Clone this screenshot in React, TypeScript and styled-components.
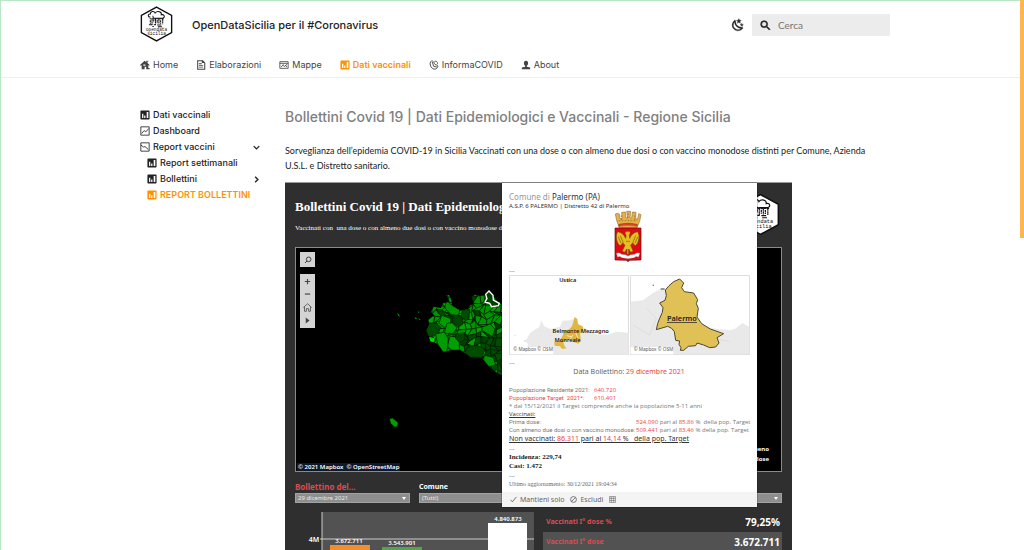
import React from "react";
import styled, { createGlobalStyle } from "styled-components";

const GlobalStyle = createGlobalStyle`
  * { box-sizing: border-box; }
  html { scrollbar-width: none; }
  body { margin: 0; background: #fff; color: #222; font-family: Lato, "Liberation Sans", sans-serif; }
  h1, h2, p, ul { margin: 0; padding: 0; }
  ul { list-style: none; }
  a { color: inherit; text-decoration: none; }
  button { border: 0; padding: 0; background: none; color: inherit; font: inherit; }
`;

const Page = styled.div`
  height: 100vh;
  overflow: hidden;
  border-top: 1px solid #b9e6c4;
  border-left: 1px solid #b9e6c4;
`;
const ScrollThumb = styled.div`
  position: fixed;
  top: 0;
  right: 0;
  width: 4px;
  height: 238px;
  background: #ffb74d;
`;
const Container = styled.div`
  max-width: 759px;
  margin: 0 auto;
  padding: 0 2px 0 7px;
`;
const Header = styled.header`
  border-bottom: 1px solid #eee;
`;
const TopBar = styled.div`
  display: flex;
  align-items: center;
  height: 48px;
`;
const SiteTitle = styled.a`
  flex: 1;
  margin-left: 19px;
  font: 500 11px/20px Inter, sans-serif;
  color: #222;
`;
const IconButton = styled.button`
  display: flex;
  margin-right: 7px;
`;
const SearchBox = styled.label`
  display: flex;
  align-items: center;
  gap: 6px;
  width: 138px;
  height: 22px;
  padding-left: 7px;
  border-radius: 1px;
  background: #ececec;
`;
const SearchInput = styled.input`
  width: 90px;
  border: 0;
  padding: 0;
  background: none;
  font: 10px/14px Lato, sans-serif;
  &::placeholder { color: #757575; opacity: 1; }
`;
const Nav = styled.nav`
  display: flex;
  gap: 18px;
  height: 28px;
  padding-top: 7px;
`;
const NavLink = styled.a<{ $active?: boolean }>`
  display: flex;
  align-items: center;
  gap: 3px;
  height: 18px;
  font: ${(p) => (p.$active ? 600 : 400)} 9px/18px Inter, sans-serif;
  color: ${(p) => (p.$active ? "#ff9100" : "#444")};
`;
const Body = styled(Container)`
  display: flex;
  align-items: flex-start;
`;
const Sidebar = styled.aside`
  width: 122px;
  flex: none;
  margin-right: 23px;
  padding-top: 29px;
`;
const SideLink = styled.a<{ $nested?: boolean; $active?: boolean }>`
  display: flex;
  align-items: center;
  gap: 3px;
  height: 16px;
  padding-left: ${(p) => (p.$nested ? 7 : 0)}px;
  font: ${(p) => (p.$active ? 600 : 500)} 9px/16px Inter, sans-serif;
  color: ${(p) => (p.$active ? "#ff9100" : "#222")};
`;
const SideText = styled.span`
  flex: 1;
  white-space: nowrap;
`;
const Main = styled.main`
  flex: 1;
  min-width: 0;
`;
const PageTitle = styled.h1`
  margin-top: 27px;
  font: 500 14px/24px Inter, sans-serif;
  color: #808080;
`;
const Intro = styled.p`
  max-width: 598px;
  margin: 14px 0 9px;
  font-size: 9px;
  line-height: 15px;
  color: #222;
`;

const Dashboard = styled.section`
  position: relative;
  max-width: 507px;
  padding: 16px 10px 0;
  border-top: 1px solid #999;
  background: #2f2f2f;
  color: #fff;
`;
const DashTitle = styled.h2`
  font: bold 13px/16px "Liberation Serif", serif;
  white-space: nowrap;
  overflow: hidden;
`;
const DashSubtitle = styled.p`
  margin: 8px 0 13px;
  font: 7px/11px "Liberation Serif", serif;
  white-space: nowrap;
  overflow: hidden;
`;
const DashLogo = styled.div`
  position: absolute;
  top: 10px;
  right: 12px;
`;
const MapPanel = styled.div`
  position: relative;
  height: 225px;
  border: 1px solid #8a8a8a;
  background: #000;
  overflow: hidden;
`;
const ToolStack = styled.div<{ $top: number }>`
  position: absolute;
  left: 4px;
  top: ${(p) => p.$top}px;
  width: 15px;
  background: #d4d4d4;
  color: #444;
`;
const Tool = styled.button<{ $tall?: boolean }>`
  display: flex;
  align-items: center;
  justify-content: center;
  width: 15px;
  height: ${(p) => (p.$tall ? 15 : 12)}px;
`;
const MapCredit = styled.div`
  position: absolute;
  left: 1px;
  bottom: 0;
  padding: 0 1px;
  background: #10182c;
  font: 600 6px/8px "Noto Sans", sans-serif;
`;
const MapLegend = styled.div`
  position: absolute;
  right: 12px;
  bottom: 7px;
  font: bold 6px/10px "Noto Sans", sans-serif;
  text-align: right;
`;
const Filters = styled.div`
  display: flex;
  align-items: flex-end;
  gap: 9px;
  height: 31px;
`;
const Filter = styled.label<{ $accent?: boolean }>`
  display: flex;
  flex-direction: column;
  gap: 1px;
  ${(p) => (p.$accent ? "width: 115px;" : "flex: 1;")}
  font: bold ${(p) => (p.$accent ? 8 : 7)}px/10px "Noto Sans", sans-serif;
  color: ${(p) => (p.$accent ? "#dd4b4f" : "#fff")};
`;
const SelectWrap = styled.span`
  position: relative;
  display: block;
  &::after {
    content: "";
    position: absolute;
    right: 4px;
    top: 4px;
    border: 2px solid transparent;
    border-top: 3px solid #fff;
  }
`;
const Select = styled.select`
  display: block;
  width: 100%;
  height: 10px;
  appearance: none;
  border: 1px solid #a2a2a2;
  border-radius: 0;
  padding: 0 2px;
  background: #8e8e8e;
  color: #e8e8e8;
  font: 6px/8px "Noto Sans", sans-serif;
`;
const Stats = styled.div`
  display: flex;
  align-items: flex-start;
  margin-top: 9px;
`;
const ChartBox = styled.div`
  width: 240px;
  flex: none;
`;
const StatTable = styled.table`
  flex: 1;
  margin-left: 8px;
  border-collapse: collapse;
  font: bold 7px/18px "Noto Sans", sans-serif;
`;
const StatRow = styled.tr<{ $shaded?: boolean }>`
  height: 20px;
  background: ${(p) => (p.$shaded ? "#525252" : "transparent")};
  th { padding: 0 3px; text-align: left; color: #dd4b4f; }
  td { padding: 0 2px; text-align: right; font-size: 10px; }
`;

const Popup = styled.div`
  position: absolute;
  top: 0;
  left: 217px;
  width: 255px;
  background: #fff;
  color: #666;
  box-shadow: 0 0 1px #000;
  font: 6px/8px "Noto Sans", sans-serif;
`;
const PopupBody = styled.div`
  display: flex;
  flex-direction: column;
  height: 309px;
  padding: 8px 7px 0;
`;
const PopupHeading = styled.div`
  font-size: 8px;
  line-height: 12px;
  color: #999;
  b { font-weight: 400; color: #333; }
`;
const PopupSub = styled.div`
  line-height: 7px;
  color: #333;
`;
const Crest = styled.div`
  display: flex;
  justify-content: center;
  height: 56px;
  margin-right: 3px;
`;
const Dashes = styled.div`
  height: 9px;
  line-height: 11px;
`;
const MiniMaps = styled.div`
  display: flex;
  gap: 1px;
  margin-bottom: 3px;
`;
const BulletinDate = styled.div`
  margin: 0 0 10px;
  padding-right: 1px;
  font-size: 7px;
  line-height: 9px;
  text-align: center;
`;
const Line = styled.div`
  display: flex;
  white-space: pre;
  font-family: "Open Sans", sans-serif;
  color: #777;
`;
const LineLabel = styled.span<{ $w: number }>`
  width: ${(p) => p.$w}px;
  flex: none;
  font-family: Roboto, sans-serif;
`;
const Red = styled.span`
  color: #ee4444;
`;
const Under = styled.span`
  text-decoration: underline;
  color: #333;
`;
const NotVaccinated = styled.div`
  height: 10px;
  font-size: 7px;
  line-height: 10px;
  white-space: pre;
`;
const Serif = styled.div<{ $strong?: boolean }>`
  font: ${(p) => (p.$strong ? "bold 7px/9px" : "6px/8px")} "Liberation Serif", serif;
  color: ${(p) => (p.$strong ? "#222" : "#666")};
`;
const PopupBar = styled.div`
  display: flex;
  align-items: center;
  gap: 6px;
  height: 15px;
  padding-left: 8px;
  background: #f4f4f4;
  font-size: 7px;
`;
const PopupAction = styled.button`
  display: flex;
  align-items: center;
  gap: 3px;
`;

/* Icons */
const HexLogo = ({ w, h }: { w: number; h: number }) => (
  <svg width={w} height={h} viewBox="0 0 96 104">
    <path d="M48 3 92 27v50L48 101 4 77V27z" fill="#fff" stroke="#111" strokeWidth="4" />
    <path d="M30 32c-8 0-8-10 0-9 0-8 11-10 14-3 7-8 20-3 18 5 10-2 12 9 3 10H46c-8 2-9-3-8-7" fill="#fff" stroke="#111" strokeWidth="3" />
    <path d="M28 37h42M30 41v10M35 38v16M40 39v8M45 37v17M50 40v10M55 37v15M60 41v10M66 37v16" stroke="#111" strokeWidth="3" strokeDasharray="6 1" />
    <path d="M26 54h10M40 54h6M50 55h12M36 59h4M52 60h12" stroke="#111" strokeWidth="3" />
    <text x="48" y="72" textAnchor="middle" fontFamily="Liberation Mono, monospace" fontSize="13" fill="#111">opendata</text>
    <text x="48" y="84" textAnchor="middle" fontFamily="Liberation Mono, monospace" fontSize="13" fill="#111">sicilia</text>
  </svg>
);
const Svg = ({ children, size = 10 }: { children: React.ReactNode; size?: number }) => (
  <svg width={size} height={size} viewBox="0 0 24 24" fill="currentColor" style={{ flex: "none" }}>
    {children}
  </svg>
);
const PollIcon = () => (
  <Svg>
    <path fillRule="evenodd" d="M3 1h18a2 2 0 0 1 2 2v18a2 2 0 0 1-2 2H3a2 2 0 0 1-2-2V3a2 2 0 0 1 2-2zM5 9v10h3V9zm5 4v6h3v-6zm6-8v14h4V5z" />
  </Svg>
);
const ChartIcon = ({ down }: { down?: boolean }) => (
  <Svg>
    <path
      d={down ? "M2 2h20v20H2zM2 7l6 5 4-1 8 7" : "M2 2h20v20H2zM4 18l6-7 4 3 7-8"}
      fill="none"
      stroke="currentColor"
      strokeWidth="2"
    />
  </Svg>
);
const HomeIcon = () => (
  <Svg>
    <path fillRule="evenodd" d="M11 2 0 12l2 2 2-2v10h7v-6h4v6h8v-3h-3v-7l2 2 1-2-5-5V4h-4v1zM8 11h5v3H8z" />
    <path d="M14 2h6v2h-6z" />
  </Svg>
);
const FileIcon = () => (
  <Svg>
    <path d="M4 2h12l5 5v15H4z" fill="none" stroke="currentColor" strokeWidth="2.5" />
    <path d="M7 8h7v2H7zM7 12h10v2H7zM7 16h10v2H7zM14 2h3l4 5h-7z" />
  </Svg>
);
const MapIcon = () => (
  <Svg>
    <path d="M2 4h20v16H2zM2 8h20M5 17l5-6 3 5 6-6M15 12l4 5" fill="none" stroke="currentColor" strokeWidth="2" />
  </Svg>
);
const CovidIcon = () => (
  <Svg>
    <path d="M4 4c4-4 8 0 9 5 1 4 8 1 8 6 0 6-8 9-13 5C3 16 1 8 4 4zM8 5l3 10 8 2M13 4c5-3 9 2 7 6" fill="none" stroke="currentColor" strokeWidth="2.2" />
  </Svg>
);
const PersonIcon = () => (
  <Svg>
    <path d="M12 2c4 0 5 3 5 6s-1 5-3 6v2l8 2v4H2v-4l8-2v-2c-2-1-3-3-3-6s1-6 5-6z" />
  </Svg>
);
const MoonIcon = () => (
  <Svg size={14}>
    <path d="M17.75 4.09 15.22 6.03 16.13 9.09 13.5 7.28 10.87 9.09 11.78 6.03 9.25 4.09 12.44 4 13.5 1 14.56 4zM21.25 11l-1.64 1.25.59 1.98-1.7-1.17-1.7 1.17.59-1.98L15.75 11l2.06-.05L18.5 9l.69 1.95zM18.97 15.95c.83-.08 1.72 1.1 1.19 1.85-.32.45-.66.87-1.08 1.27-3.91 3.93-10.24 3.93-14.14 0-3.91-3.9-3.91-10.24 0-14.14.4-.4.82-.76 1.27-1.08.75-.53 1.93.36 1.85 1.19-.27 2.86.69 5.83 2.89 8.02 2.19 2.2 5.15 3.16 8.02 2.89m-1.64 2.02c-2.83-.16-5.63-1.33-7.8-3.47-2.17-2.19-3.33-5-3.49-7.82-2.81 3.14-2.7 7.96.31 10.98 3.02 3.01 7.84 3.12 10.98.31" stroke="currentColor" strokeWidth="0.6" />
  </Svg>
);
const SearchIcon = () => (
  <Svg size={13}>
    <path d="M9.5 3A6.5 6.5 0 0 1 16 9.5c0 1.61-.59 3.09-1.56 4.23l.27.27h.79l5 5-1.5 1.5-5-5v-.79l-.27-.27A6.52 6.52 0 0 1 9.5 16a6.5 6.5 0 0 1 0-13m0 2a4.5 4.5 0 1 0 0 9 4.5 4.5 0 0 0 0-9" stroke="currentColor" strokeWidth="1" />
  </Svg>
);
const Chevron = ({ right }: { right?: boolean }) => (
  <Svg size={11}>
    <path d={right ? "M9 6l6 6-6 6" : "M6 9l6 6 6-6"} fill="none" stroke="currentColor" strokeWidth="3" />
  </Svg>
);

/* Municipality mosaic of western Sicily */
const WEST =
  "M484 166 492 165 499 180 501 195 516 206 527 212 548 208 556 196 567 191 560 172 570 164 584 168 600 166 612 152 626 170 640 188 660 198V412L638 400 612 380 596 360 590 352 556 352 545 342 526 330 498 330 476 336 458 312 438 304 432 290 424 272 434 252 430 240 448 226 438 216 446 200 468 204 474 190 494 186z";
const GREENS = ["#009400", "#004c00", "#00a300", "#006a00", "#004000"];
const noise = (i: number, j: number, k: number) => {
  const v = Math.sin(i * 127.1 + j * 311.7 + k * 74.7) * 43758.5453;
  return v - Math.floor(v);
};
const STEP = 16;
const point = (i: number, j: number) =>
  `${Math.round(400 + i * STEP + (j % 2) * 8 + noise(i, j, 1) * 15)} ${Math.round(145 + j * STEP + noise(i, j, 2) * 15)}`;
const cells = Array.from({ length: 18 * 18 }, (_, n) => {
  const i = n % 18;
  const j = Math.floor(n / 18);
  const dark = i > 7 && j > 7 ? 0.75 : 0.2;
  const r = noise(i, j, 3);
  const fill = r < dark ? GREENS[r < dark / 2 ? 1 : 4] : GREENS[r > 0.8 ? 2 : 0];
  return { d: `M${point(i, j)}L${point(i + 1, j)}L${point(i + 1, j + 1)}L${point(i, j + 1)}z`, fill, key: n };
});
const patches: [string, string][] = [
  ["#004c00", "M430 252 450 248 468 262 456 286 432 290 424 272z"],
  ["#009c00", "M470 226 498 236 496 252 478 262 462 250z"],
  ["#009c00", "M486 250 502 248 516 264 504 280 478 280z"],
  ["#009c00", "M452 282 478 276 490 296 486 334 474 336 458 312z"],
  ["#00a000", "M494 290 510 290 522 306 524 330 498 330 488 318z"],
  ["#004600", "M504 226 532 228 534 252 518 262 502 246z"],
  ["#004c00", "M532 210 554 208 552 236 542 242 528 232z"],
  ["#004800", "M510 282 540 278 538 300 524 308 512 294z"],
  ["#004c00", "M548 322 576 316 600 326 592 352 556 352 540 338z"],
  ["#009400", "M590 262 616 252 630 268 622 290 606 280 594 274z"],
  ["#009400", "M598 346 624 352 632 374 612 380 596 360z"],
  ["#009400", "M484 180 500 196 524 210 520 226 498 224 480 204z"],
];
const SicilyMap = () => (
  <svg width="485" height="223" viewBox="33 24 1455 669" style={{ display: "block" }}>
    <defs>
      <clipPath id="west"><path d={WEST} /></clipPath>
    </defs>
    <g clipPath="url(#west)" stroke="#001c00" strokeWidth="2">
      {cells.map((c) => <path key={c.key} d={c.d} fill={c.fill} />)}
      {patches.map(([fill, d]) => <path key={d} d={d} fill={fill} />)}
    </g>
    <path d="M612 153 624 166 625 180 643 190 640 197 620 200 614 190 600 186 606 176 602 163z" fill="#004000" stroke="#fff" strokeWidth="4" />
    <path d="M432 290 440 296 450 292 446 306 436 304z" fill="#00e000" />
    <path d="M314 538 322 535 330 541 339 549 337 559 328 560 318 550z" fill="#009c00" stroke="#006600" />
    <path d="M336 219l6 4 3 8-5-4zM389 232l8 3-6 3zM400 234l7 5-4 1zM398 214l6 2-3 4zM581 22h6v2h-6z" fill="#008f00" />
  </svg>
);

const CityCrest = () => (
  <svg width="28" height="53" viewBox="0 0 84 159">
    <path d="M4 12 10 10 16 12 18 26 24 26 23 7 34 6 36 24 41 24 38 4h12l-2 20h5l2-18 11 1-1 19 6 1 3-16 7 3-4 20-8 19H16L8 32z" fill="#e8b04a" stroke="#7a5a1c" strokeWidth="1.5" />
    <path d="M22 16v15M42 10v19M62 16v15M14 32h56" stroke="#8a6218" strokeWidth="2" strokeDasharray="5 4" />
    <path d="M14 43q28-8 56 0v6q-28-6-56 0z" fill="#d9432c" stroke="#6b4a10" />
    <path d="M3 54h78v96l-34 1-5 4-5-4-34-1z" fill="#e30613" stroke="#5a1010" strokeWidth="2" />
    <path d="M42 64c8-2 8 8 4 11l1 10c4-11 14-19 24-20 6 9 5 22 0 34l-7 9-8-9-6 7 8 18-8 3-6-10v16h-5v-16l-7 10-8-3 9-18-7-7-8 9-7-9c-5-12-6-25 0-34 10 1 20 9 24 20l1-10c-5-3-4-10 2-11z" fill="#e8bd22" stroke="#6e4b08" strokeWidth="2" />
    <path d="M19 77l9 22M13 81l8 19M65 77l-9 22M71 81l-8 19M36 94h12" stroke="#7e5c0c" strokeWidth="2" />
    <path d="M7 130q9-5 16 3l12 1 7 4 8-4 12-1q7-8 16-3l-5 12q-7-5-12 1l-19 3-19-3q-7-6-12-1z" fill="#fff" stroke="#777" />
  </svg>
);

const MapCreditSmall = ({ x }: { x: number }) => (
  <g>
    <path d={`M${x} 246h128v22H${x}z`} fill="#fff" />
    <text x={x + 9} y="259" fontSize="14" fill="#555">© Mapbox © OSM</text>
  </g>
);
const ProvinceMap = () => (
  <svg width="120" height="80" viewBox="27 30 360 240" fontFamily="Noto Sans, sans-serif">
    <path d="M28 31h358v238H28z" fill="#fff" stroke="#d8d8d8" strokeWidth="3" />
    <path d="M78 269 84 240 78 225 92 202 118 186 124 166 132 184 150 192 180 185 188 167 212 166 226 158 240 184 256 190 285 206 320 210 350 200 385 203V269z" fill="#e9e9e9" />
    <path d="M44 209l5 2-5 3zM70 224l12 4-7 3z" fill="#ddd" />
    <path d="M224 156 232 162 234 178 248 184 250 196 240 206 242 220 236 236 222 232 214 222 200 226 190 232 194 244 200 250 186 252 180 244 164 242 163 232 180 226 188 212 192 196 206 194 216 184 220 170z" fill="#e0b840" />
    <path d="M214 198l12 4 8 16M200 212l14 3M208 228l10-18" fill="none" stroke="#f7e9bb" strokeWidth="3" />
    <circle cx="204" cy="47" r="4" fill="#e0b840" />
    <MapCreditSmall x={31} />
    <g fill="#222" fontSize="17" fontWeight="600" textAnchor="middle">
      <text x="203" y="51">Ustica</text>
      <text x="242" y="205">Belmonte Mezzagno</text>
      <text x="203" y="232">Monreale</text>
    </g>
  </svg>
);
const CityMap = () => (
  <svg width="120" height="80" viewBox="391 30 360 240" fontFamily="Noto Sans, sans-serif">
    <path d="M392 31h358v238H392z" fill="#fff" stroke="#d8d8d8" strokeWidth="3" />
    <path d="M393 110 430 106 460 84 484 71 500 76 600 170 625 188 690 196 706 192 728 174 749 186V268H393z" fill="#e9e9e9" />
    <path d="M400 180l50 30 20-50M560 240l40-30 90 20M440 130l30 30" fill="none" stroke="#dedede" strokeWidth="3" />
    <path d="M459 59h4v4h-4zM483 70h12v4h-12z" fill="#777" />
    <path d="M497 75 508 62 522 50 540 42 552 54 546 68 554 80 582 84 594 104 590 116 596 130 592 156 606 176 632 192 666 204 672 206 652 218 658 234 648 246 630 248 612 240 592 234 588 242 566 244 552 256 542 256 544 248 538 238 540 228 528 226 524 200 516 190 504 184 470 194 474 176 480 160 488 142 490 128 480 114 496 106 500 92z" fill="#e0c155" stroke="#4c4732" strokeWidth="3" />
    <MapCreditSmall x={393} />
    <text x="502" y="168" fontSize="22" fontWeight="600" fill="#222" textDecoration="underline">Palermo</text>
  </svg>
);

const BarChart = () => (
  <svg width="240" height="80" viewBox="0 0 240 80" style={{ display: "block" }} fontFamily="Noto Sans, sans-serif">
    <path d="M27 0h212v80H27z" fill="#525252" />
    <path d="M27 0v80M25 27h214" stroke="#ccc" fill="none" />
    <path d="M35 33h40v47H35z" fill="#f28e2b" />
    <path d="M87 35h40v45H87z" fill="#59a14f" />
    <path d="M193 11h39v69h-39z" fill="#fff" />
    <g fill="#fff" fontSize="6" fontWeight="600" textAnchor="middle">
      <text x="19" y="30" fontSize="7">4M</text>
      <text x="54" y="31">3.672.711</text>
      <text x="107" y="33">3.543.901</text>
      <text x="213" y="9">4.840.873</text>
    </g>
  </svg>
);

const navItems = [
  { label: "Home", icon: <HomeIcon /> },
  { label: "Elaborazioni", icon: <FileIcon /> },
  { label: "Mappe", icon: <MapIcon /> },
  { label: "Dati vaccinali", icon: <PollIcon />, active: true },
  { label: "InformaCOVID", icon: <CovidIcon /> },
  { label: "About", icon: <PersonIcon /> },
];
const sideItems = [
  { label: "Dati vaccinali", icon: <PollIcon /> },
  { label: "Dashboard", icon: <ChartIcon /> },
  { label: "Report vaccini", icon: <ChartIcon down />, end: <Chevron /> },
  { label: "Report settimanali", icon: <PollIcon />, nested: true },
  { label: "Bollettini", icon: <PollIcon />, nested: true, end: <Chevron right /> },
  { label: "REPORT BOLLETTINI", icon: <PollIcon />, nested: true, active: true },
];

export default function App() {
  return (
    <Page>
      <GlobalStyle />
      <Header>
        <Container>
          <TopBar>
            <a href="#home" aria-label="OpenDataSicilia"><HexLogo w={33} h={36} /></a>
            <SiteTitle href="#home">OpenDataSicilia per il #Coronavirus</SiteTitle>
            <IconButton aria-label="Tema scuro"><MoonIcon /></IconButton>
            <SearchBox>
              <SearchIcon />
              <SearchInput type="text" placeholder="Cerca" aria-label="Cerca" />
            </SearchBox>
          </TopBar>
          <Nav>
            {navItems.map((n) => (
              <NavLink key={n.label} href="#nav" $active={n.active}>{n.icon}{n.label}</NavLink>
            ))}
          </Nav>
        </Container>
      </Header>
      <Body>
        <Sidebar>
          <ul>
            {sideItems.map((s) => (
              <li key={s.label}>
                <SideLink href="#side" $nested={s.nested} $active={s.active}>
                  {s.icon}<SideText>{s.label}</SideText>{s.end}
                </SideLink>
              </li>
            ))}
          </ul>
        </Sidebar>
        <Main>
          <PageTitle>Bollettini Covid 19 | Dati Epidemiologici e Vaccinali - Regione Sicilia</PageTitle>
          <Intro>
            Sorveglianza dell’epidemia COVID-19 in Sicilia Vaccinati con una dose o con almeno due dosi o con vaccino
            monodose distinti per Comune, Azienda U.S.L. e Distretto sanitario.
          </Intro>
          <Dashboard>
            <DashTitle>Bollettini Covid 19 | Dati Epidemiologici</DashTitle>
            <DashSubtitle>Vaccinati con&nbsp; una dose o con almeno due dosi o con vaccino monodose distinti</DashSubtitle>
            <DashLogo><HexLogo w={39} h={43} /></DashLogo>
            <MapPanel>
              <SicilyMap />
              <ToolStack $top={4}>
                <Tool $tall aria-label="Cerca nella mappa">
                  <Svg size={8}><path d="M14 3a7 7 0 1 1 0 14 7 7 0 0 1 0-14zM9 15l-6 6" fill="none" stroke="currentColor" strokeWidth="3" /></Svg>
                </Tool>
              </ToolStack>
              <ToolStack $top={26}>
                <Tool $tall aria-label="Ingrandisci"><Svg size={7}><path d="M10 3h4v7h7v4h-7v7h-4v-7H3v-4h7z" /></Svg></Tool>
                <Tool aria-label="Riduci"><Svg size={7}><path d="M3 5h18v4H3z" /></Svg></Tool>
                <Tool aria-label="Vista iniziale">
                  <Svg size={9}><path d="M1 12 12 2l11 10M4 10v12h5v-7h6v7h5V10" fill="none" stroke="currentColor" strokeWidth="2" /></Svg>
                </Tool>
                <Tool $tall aria-label="Altri strumenti"><Svg size={7}><path d="M6 2l13 10L6 22z" /></Svg></Tool>
              </ToolStack>
              <MapCredit>© 2021 Mapbox&nbsp; © OpenStreetMap</MapCredit>
              <MapLegend>Con almeno<br />una dose</MapLegend>
            </MapPanel>
            <Filters>
              <Filter $accent>
                Bollettino del...
                <SelectWrap><Select><option>29 dicembre 2021</option></Select></SelectWrap>
              </Filter>
              <Filter>
                Comune
                <SelectWrap><Select><option>(Tutti)</option></Select></SelectWrap>
              </Filter>
            </Filters>
            <Stats>
              <ChartBox><BarChart /></ChartBox>
              <StatTable>
                <tbody>
                  <StatRow><th scope="row">Vaccinati I° dose %</th><td>79,25%</td></StatRow>
                  <StatRow $shaded><th scope="row">Vaccinati I° dose</th><td>3.672.711</td></StatRow>
                </tbody>
              </StatTable>
            </Stats>
            <Popup>
              <PopupBody>
                <PopupHeading>Comune di <b>Palermo (PA)</b></PopupHeading>
                <PopupSub>A.S.P. 6 PALERMO | Distretto 42 di Palermo</PopupSub>
                <Crest><CityCrest /></Crest>
                <Dashes>---</Dashes>
                <MiniMaps><ProvinceMap /><CityMap /></MiniMaps>
                <Dashes>---</Dashes>
                <BulletinDate>Data Bollettino<Red>: 29 dicembre 2021</Red></BulletinDate>
                <Line><LineLabel $w={85}>Popoplazione Residente 2021:</LineLabel><Red>640.720</Red></Line>
                <Line><LineLabel $w={85}><Red>Popoplazione Target  2021*:</Red></LineLabel><Red>610.401</Red></Line>
                <Line>* dal 15/12/2021 il Target comprende anche la popolazione 5-11 anni</Line>
                <Line><Under>Vaccinati:</Under></Line>
                <Line><LineLabel $w={127}>Prima dose:</LineLabel><Red>524.090</Red> pari al <Red>85,86</Red> %  della pop. Target</Line>
                <Line><LineLabel $w={127}>Con almeno due dosi o con vaccino monodose:</LineLabel><Red>509.441</Red> pari al <Red>83,46</Red> % della pop. Target</Line>
                <NotVaccinated><Under>Non vaccinati: <Red>86.311</Red> pari al <Red>14,14</Red> %   della pop. Target</Under></NotVaccinated>
                <Dashes>---</Dashes>
                <Serif $strong>Incidenza: 229,74</Serif>
                <Serif $strong>Casi: 1.472</Serif>
                <Dashes>---</Dashes>
                <Serif>Ultimo aggiornamento: 30/12/2021 19:04:34</Serif>
              </PopupBody>
              <PopupBar>
                <PopupAction>
                  <Svg size={7}><path d="M2 13l6 7L22 3" fill="none" stroke="currentColor" strokeWidth="3" /></Svg>Mantieni solo
                </PopupAction>
                <PopupAction>
                  <Svg size={7}><path d="M12 2a10 10 0 1 1 0 20 10 10 0 0 1 0-20zM5 19 19 5" fill="none" stroke="currentColor" strokeWidth="3" /></Svg>Escludi
                </PopupAction>
                <PopupAction aria-label="Visualizza dati">
                  <Svg size={7}><path d="M1 2h22v20H1zM1 8h22M1 15h22M8 2v20M16 2v20" fill="none" stroke="currentColor" strokeWidth="2" /></Svg>
                </PopupAction>
              </PopupBar>
            </Popup>
          </Dashboard>
        </Main>
      </Body>
      <ScrollThumb />
    </Page>
  );
}
